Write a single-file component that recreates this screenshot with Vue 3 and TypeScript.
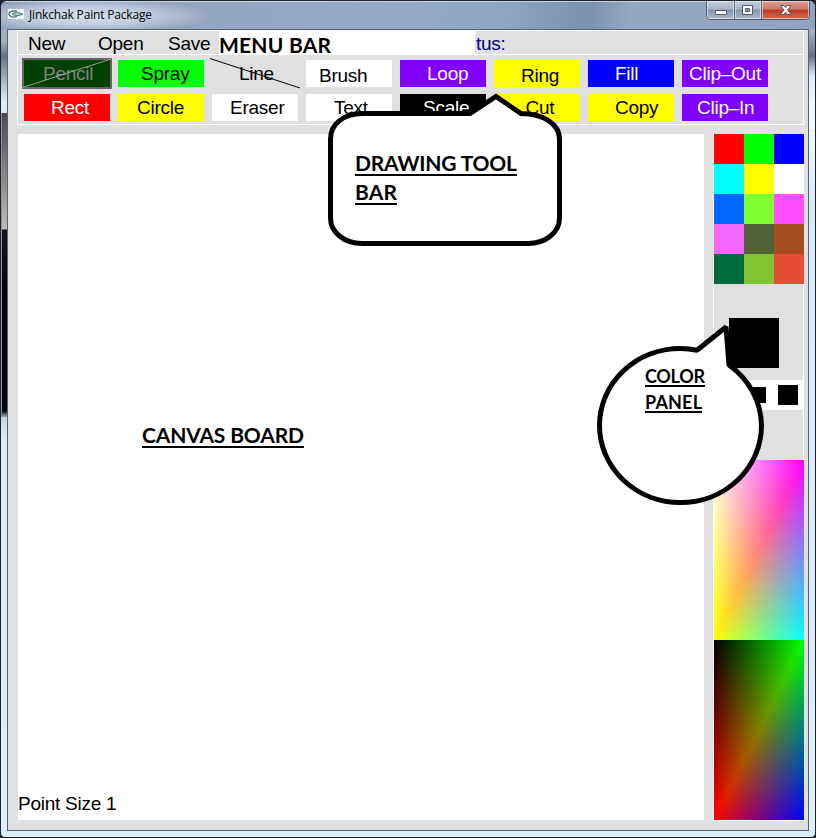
<script setup lang="ts">
interface Tool {
  name: string
  bg: string
  fg: string
  indent: number
  drop?: number
  kind?: 'selected' | 'bare'
}

const YELLOW = '#ffff00'
const VIOLET = '#8000ff'

const tools: Tool[] = [
  { name: 'Pencil', bg: '#004000', fg: '#808080', indent: 19, kind: 'selected' },
  { name: 'Spray', bg: '#00ff00', fg: '#000', indent: 23 },
  { name: 'Line', bg: 'transparent', fg: '#000', indent: 27, kind: 'bare' },
  { name: 'Brush', bg: '#fff', fg: '#000', indent: 13, drop: 2 },
  { name: 'Loop', bg: VIOLET, fg: '#fff', indent: 27 },
  { name: 'Ring', bg: YELLOW, fg: '#000', indent: 27, drop: 2 },
  { name: 'Fill', bg: '#0000ff', fg: '#fff', indent: 27 },
  { name: 'Clip–Out', bg: VIOLET, fg: '#fff', indent: 7 },
  { name: 'Rect', bg: '#ff0000', fg: '#fff', indent: 27 },
  { name: 'Circle', bg: YELLOW, fg: '#000', indent: 19 },
  { name: 'Eraser', bg: '#fff', fg: '#000', indent: 18 },
  { name: 'Text', bg: '#fff', fg: '#000', indent: 28 },
  { name: 'Scale', bg: '#000', fg: '#fff', indent: 23 },
  { name: 'Cut', bg: YELLOW, fg: '#000', indent: 31.5 },
  { name: 'Copy', bg: YELLOW, fg: '#000', indent: 27 },
  { name: 'Clip–In', bg: VIOLET, fg: '#fff', indent: 15 },
]

const swatches: string[] = [
  '#ff0000', '#00ff00', '#0000ff',
  '#00ffff', '#ffff00', '#ffffff',
  '#0066ff', '#80ff33', '#ff4dff',
  '#f066ff', '#526133', '#a64d1f',
  '#00693d', '#80c433', '#e64d33',
]
</script>

<template>
  <div class="window">
    <header class="titlebar">
      <svg class="app-icon" width="16" height="10" viewBox="0 0 16 10">
        <rect width="16" height="10" fill="#f4f8f8" />
        <path d="M9 2.2C5 .8 1 2.6 1 5s4 3.800 8 2.400" fill="none" stroke="#4b7f8c" stroke-width="1.5" />
        <path d="M4 5c2-2 6-2 11 .2C11 7 6 7 4 5Z" fill="#b9ced3" stroke="#477783" stroke-width="1" />
      </svg>
      <span class="title">Jinkchak Paint Package</span>
      <div class="controls">
        <span class="ctl min">
          <svg width="27" height="19" viewBox="0 0 27 19"><rect x="8.500" y="10.500" width="11" height="4" rx=".5" fill="#fff" stroke="#55596b" /></svg>
        </span>
        <span class="ctl max">
          <svg width="26" height="19" viewBox="0 0 26 19"><path fill-rule="evenodd" d="M7.500 5.500h10v9h-10zM10.500 8.500h4v3h-4z" fill="#fff" stroke="#55596b" /></svg>
        </span>
        <span class="ctl close">
          <svg width="47" height="19" viewBox="0 0 47 19"><path d="M18.500 5.500h3.500l1.700 2.200 1.700-2.200h3.500l-3.400 4.400 3.400 4.600h-3.500l-1.700-2.300-1.700 2.300h-3.500l3.400-4.600z" fill="#fff" stroke="#55596b" /></svg>
        </span>
      </div>
    </header>

    <main class="client">
      <section class="header">
        <nav class="menu">
          <span class="item new">New</span>
          <span class="item open">Open</span>
          <span class="item save">Save</span>
          <span class="patch"></span>
          <span class="item status">tus:</span>
        </nav>
        <div class="tools">
          <div
            v-for="t in tools"
            :key="t.name"
            class="tool"
            :class="t.kind"
            :style="{ background: t.bg, color: t.fg, paddingLeft: t.indent + 'px', paddingTop: (t.drop ?? 0) + 'px' }"
          >
            <span>{{ t.name }}</span>
            <svg v-if="t.kind" class="strike" width="90" height="31" viewBox="0 0 90 31">
              <path v-if="t.kind === 'selected'" d="M.5 29.500L89 1" stroke="#93a893" />
              <path v-else d="M0 .5L90 30" stroke="#000" />
            </svg>
          </div>
        </div>
      </section>

      <div class="work">
        <section class="canvas"><span>Point Size 1</span></section>
        <aside class="panel">
          <div class="swatches">
            <i v-for="c in swatches" :key="c" :style="{ background: c }"></i>
          </div>
          <div class="current"></div>
          <div class="sizes"><i class="s16"></i><i class="s20"></i></div>
          <div class="mix light"></div>
          <div class="mix dark"></div>
        </aside>
      </div>
    </main>

    <svg class="notes" width="816" height="838" viewBox="0 0 816 838">
      <g fill="#fff" stroke="#000" stroke-width="5">
        <path d="M362 113.500H470L496 96.500L521 113.500C543 113.500 559.500 124 559.500 139V218C559.500 232 546 243.500 528 243.500H362C344 243.500 330.500 232 330.500 218V139C330.500 124 344 113.500 362 113.500Z" />
        <path stroke-linejoin="bevel" d="M697 350.300L726 327L729 365A81 77 0 0 1 761.500 425.500A81 77 0 0 1 680.500 502.500A81 77 0 0 1 599.500 425.500A81 77 0 0 1 680.500 348.500Q689 348.500 697 350.300Z" />
      </g>
      <g class="big">
        <text x="219" y="53" textLength="112">MENU BAR</text>
        <text x="355" y="171" textLength="162">DRAWING TOOL</text>
        <text x="355" y="200" textLength="42">BAR</text>
        <text x="142" y="443" textLength="162">CANVAS BOARD</text>
      </g>
      <g class="small">
        <text x="645" y="383" textLength="60">COLOR</text>
        <text x="645" y="409" textLength="57">PANEL</text>
      </g>
      <path d="M355 175H517M355 204H397M142 447H304M645 386H705M645 412H702" stroke="#000" stroke-width="2" />
    </svg>
  </div>
</template>

<style>
body { margin: 0; background: #20242c; }
</style>

<style scoped>
.window {
  position: relative;
  box-sizing: border-box;
  width: 816px;
  height: 838px;
  padding: 1px 7px 7px;
  border: 1px solid #1d222b;
  border-radius: 7px 7px 5px 5px;
  overflow: hidden;
  background:
    linear-gradient(90deg, #8a93a0 0, #8a93a0 1px, transparent 1px) 0 112px / 6px 304px no-repeat,
    linear-gradient(#c3d2e4, #dcebfb 20px, #dfeefe) 0 416px / 7px 420px no-repeat,
    linear-gradient(#4c484c, #c0bab8 116px, #19151c 117px, #050309 180px, #050309 298px, #a9b4c6 304px) 0 112px / 7px 304px no-repeat,
    linear-gradient(#98a9c4, #a3b1c4 30px, #667186 55px, #dcebfa 75px, #f6faff 110px, #d9eafb 200px, #dfeefe) right 0 top 0 / 7px 100% no-repeat,
    linear-gradient(#98a9c4, #a3b1c4 40px, #65718a 55px, #dcebfa 100px, #dfeefe);
}
.titlebar {
  display: flex;
  height: 27px;
  margin: -1px -7px 0;
  padding-left: 7px;
  align-items: flex-start;
  border-top: 1px solid #c7d3e4;
  background:
    radial-gradient(ellipse 125px 18px at 85px 14px, #d5deeb, #c1cddf 50%, transparent),
    linear-gradient(100deg, #8a9ab5 0, #95a6c3 27%, #96aac8 50%, #8ea4c3 62%, #7c91af 72%, #94a7c3 77%, #90a2bd 100%);
}
.app-icon { margin-top: 7px; }
.title {
  margin: 5px 0 0 5px;
  font: 12px/16px "Open Sans", "Noto Sans", sans-serif;
  letter-spacing: -0.17px;
  color: #000;
}
.controls {
  display: flex;
  height: 19px;
  box-sizing: border-box;
  margin: -1px 5px 0 auto;
  border: 1px solid #51596b;
  border-top: 0;
  border-radius: 0 0 5px 5px;
  overflow: hidden;
}
.ctl { box-shadow: inset 0 0 0 1px rgba(255, 255, 255, .5); background: linear-gradient(#c4ccd9, #a8b5c8 45%, #8493ac 50%, #a9b9ce); }
.ctl svg { display: block; margin-top: -1px; }
.ctl + .ctl { border-left: 1px solid #59637a; }
.close { background: linear-gradient(#dda196, #cc7565 45%, #b83a22 50%, #d46d4c); }
.client {
  box-sizing: border-box;
  width: 802px;
  height: 802px;
  margin-left: -1px;
  padding: 0 0 0 9px;
  border: 1px solid #59636e;
  background: #e0e0e0;
  font: 19px/22px "Liberation Sans", Arial, sans-serif;
  letter-spacing: -0.25px;
}
.header {
  box-sizing: border-box;
  width: 787px;
  height: 95px;
  border: 1px solid #fff;
}
.menu { display: flex; height: 23px; border-bottom: 1px solid #fff; }
.item { box-sizing: border-box; line-height: 25px; white-space: nowrap; }
.new { width: 80px; padding-left: 10px; }
.open { width: 70px; }
.save { width: 51px; }
.patch { width: 256px; background: #fff; margin-top: -1px; height: 25px; }
.status { padding-left: 1px; color: #000080; }
.tools {
  display: grid;
  grid-template-columns: repeat(8, 86px);
  grid-template-rows: 27px 27px;
  gap: 7px 8px;
  padding: 5px 6px 0;
}
.tool { position: relative; box-sizing: border-box; line-height: 27px; white-space: nowrap; }
.selected { outline: 2px solid #666; }
.strike { position: absolute; left: -2px; top: -2px; }
.work { display: flex; gap: 9px; margin: 9px 0 0 1px; }
.canvas {
  display: flex;
  box-sizing: border-box;
  width: 686px;
  height: 686px;
  padding-bottom: 5px;
  align-items: flex-end;
  background: #fff;
}
.panel {
  box-sizing: border-box;
  width: 91px;
  height: 687px;
  border: 1px solid #fff;
  border-top: 0;
}
.swatches { display: grid; grid-template-columns: repeat(3, 30px); grid-auto-rows: 30px; width: 90px; }
.current { width: 50px; height: 50px; margin: 34px 0 12px 15px; background: #000; }
.sizes {
  display: flex;
  box-sizing: border-box;
  height: 30px;
  margin-bottom: 50px;
  padding-left: 36px;
  gap: 12px;
  align-items: center;
  background: #fff;
}
.sizes i { background: #000; }
.s16 { width: 16px; height: 16px; }
.s20 { width: 20px; height: 20px; }
.mix { position: relative; width: 90px; height: 180px; }
.mix::after { content: ""; position: absolute; inset: 0; clip-path: polygon(100% 0, 100% 100%, 0 100%); }
.light { background: linear-gradient(to right, #fff, #f0f), linear-gradient(#fff, #ff0); background-blend-mode: multiply; }
.light::after {
  background: linear-gradient(to bottom right, #fff 50%, #0ff), linear-gradient(#f0f, #fff), linear-gradient(to right, #ff0, #fff);
  background-blend-mode: multiply;
}
.dark { background: linear-gradient(to right, #000, #0f0), linear-gradient(#000, #f00); background-blend-mode: screen; }
.dark::after {
  background: linear-gradient(to bottom right, #000 50%, #00f), linear-gradient(#0f0, #000), linear-gradient(to right, #f00, #000);
  background-blend-mode: screen;
}
.notes { position: absolute; left: -1px; top: -1px; font-family: Lato, "Open Sans", sans-serif; font-weight: 700; }
.big { font-size: 21px; }
.small { font-size: 18px; }
</style>
